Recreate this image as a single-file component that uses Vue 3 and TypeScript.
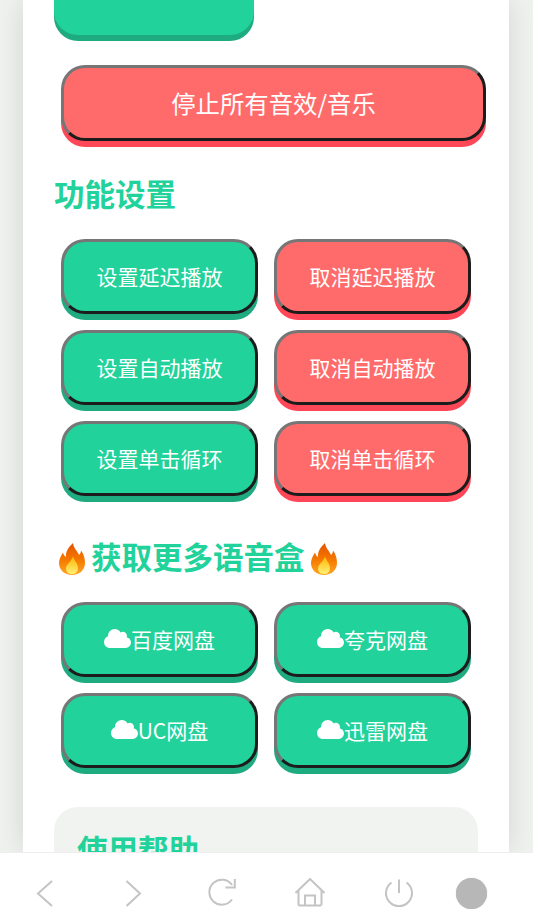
<script setup lang="ts">
interface Btn { label: string; kind: 'green' | 'red'; cloud?: boolean }
const settings: Btn[] = [
  { label: '设置延迟播放', kind: 'green' },
  { label: '取消延迟播放', kind: 'red' },
  { label: '设置自动播放', kind: 'green' },
  { label: '取消自动播放', kind: 'red' },
  { label: '设置单击循环', kind: 'green' },
  { label: '取消单击循环', kind: 'red' },
]
const drives: Btn[] = [
  { label: '百度网盘', kind: 'green', cloud: true },
  { label: '夸克网盘', kind: 'green', cloud: true },
  { label: 'UC网盘', kind: 'green', cloud: true },
  { label: '迅雷网盘', kind: 'green', cloud: true },
]
const cloudPath = 'M537.6 226.6c4.1-10.7 6.4-22.4 6.4-34.6 0-53-43-96-96-96-19.7 0-38.1 6-53.3 16.2C367 64.2 315.3 32 256 32c-88.4 0-160 71.6-160 160 0 2.7.1 5.4.2 8.1C40.2 219.8 0 273.2 0 336c0 79.5 64.5 144 144 144h368c70.7 0 128-57.3 128-128 0-61.9-44-113.6-102.4-125.4z'
</script>

<template>
  <div class="screen">
    <main class="scroller">
      <div class="card">
        <div class="top-button"></div>
        <button class="btn red wide">停止所有音效/音乐</button>

        <h2 class="heading first">功能设置</h2>
        <div class="grid">
          <button v-for="b in settings" :key="b.label" class="btn" :class="b.kind">{{ b.label }}</button>
        </div>

        <h2 class="heading fire-heading">
          <svg class="flame" viewBox="0 0 26 32">
            <defs>
              <linearGradient id="flameOuter" x1="0" y1="0" x2="0" y2="1">
                <stop offset="0" stop-color="#e65100" />
                <stop offset="0.55" stop-color="#f57c00" />
                <stop offset="1" stop-color="#ffa726" />
              </linearGradient>
              <linearGradient id="flameInner" x1="0" y1="0" x2="0" y2="1">
                <stop offset="0" stop-color="#ffb300" />
                <stop offset="1" stop-color="#fff176" />
              </linearGradient>
            </defs>
            <path fill="url(#flameOuter)" d="M14 0C14.500 5 18.500 8 20 12 21 11 22 9.500 22 7.500 24.800 11 26 15.500 26 20 26 27 20.500 32 13 32 5.500 32 0 27 0 20 0 16 2 13 4 9.500 4.500 11.500 5.500 13 7 14 6.500 8 10 4 14 0Z" />
            <path fill="url(#flameInner)" d="M14 13C14.500 17 19 20 19 25 19 29 16.500 31 13 31 9.500 31 7 29 7 25.500 7 21 12.500 19 14 13Z" />
          </svg>
          <span>获取更多语音盒</span>
          <svg class="flame" viewBox="0 0 26 32">
            <path fill="url(#flameOuter)" d="M14 0C14.500 5 18.500 8 20 12 21 11 22 9.500 22 7.500 24.800 11 26 15.500 26 20 26 27 20.500 32 13 32 5.500 32 0 27 0 20 0 16 2 13 4 9.500 4.500 11.500 5.500 13 7 14 6.500 8 10 4 14 0Z" />
            <path fill="url(#flameInner)" d="M14 13C14.500 17 19 20 19 25 19 29 16.500 31 13 31 9.500 31 7 29 7 25.500 7 21 12.500 19 14 13Z" />
          </svg>
        </h2>
        <div class="grid">
          <button v-for="b in drives" :key="b.label" class="btn" :class="b.kind">
            <svg class="cloud" viewBox="0 32 640 448"><path :d="cloudPath" fill="#fff" /></svg><span>{{ b.label }}</span>
          </button>
        </div>

        <section class="help">
          <h2 class="heading help-title">使用帮助</h2>
        </section>
      </div>
    </main>

    <nav class="bar">
      <div class="icons">
        <svg class="icon" viewBox="0 0 30 30"><path d="M22 3 8 15.500 22 28" /></svg>
        <svg class="icon" viewBox="0 0 30 30"><path d="M8.500 3 22 15.500 8.500 28" /></svg>
        <svg class="icon" viewBox="0 0 30 30"><path d="M25.100 7A12.500 12.500 0 1 0 25 21.500M27.800 1V9.500H18.500" /></svg>
        <svg class="icon" viewBox="0 0 30 30"><path d="M0.500 15 15 1l14.500 14M3.500 12.500V26a1.500 1.500 0 0 0 1.500 1.500h20a1.500 1.500 0 0 0 1.500-1.500V12.500M10 27.500V17.500h10v10" /></svg>
        <svg class="icon" viewBox="0 0 30 30"><path d="M7.500 4.500A13 13 0 1 0 22.500 4.500M15 1.500V15" /></svg>
      </div>
      <div class="avatar"></div>
    </nav>
  </div>
</template>

<style scoped>
.screen {
  width: 533px;
  height: 918px;
  display: flex;
  flex-direction: column;
  overflow: hidden;
  background: #f0f2ef;
  font-family: "Noto Sans CJK SC", Roboto, sans-serif;
}
.scroller {
  flex: 1;
  min-height: 0;
  overflow: hidden;
  padding: 0 24px 0 23px;
}
.card {
  background: #fff;
  box-shadow: 0 0 28px rgba(0, 0, 0, 0.12);
  padding: 0 31px;
  height: 100%;
  overflow: hidden;
}
.top-button {
  width: 200px;
  height: 35px;
  background: #21d29a;
  border-radius: 0 0 24px 24px;
  box-shadow: 0 6px 0 #1fab80;
  margin-bottom: 30px;
}
.btn {
  box-sizing: border-box;
  width: 197px;
  height: 75px;
  border: 3px solid;
  border-color: #767676 #1c1c1c #1c1c1c #767676;
  border-radius: 24px;
  color: #fff;
  font-family: inherit;
  font-size: 21px;
  padding: 0 0 2px;
  display: flex;
  align-items: center;
  justify-content: center;
}
.btn.green {
  background: #21d29a;
  box-shadow: 0 6px 0 #1fab80;
}
.btn.red {
  background: #ff6b6b;
  box-shadow: 0 6px 0 #ff4757;
}
.btn.wide {
  width: 425px;
  height: 76px;
  margin-left: 7px;
  font-size: 24.4px;
}
.heading {
  margin: 0;
  color: #21d29a;
  font-size: 30.5px;
  font-weight: 700;
  line-height: 40px;
}
.first {
  margin-top: 32px;
}
.fire-heading {
  margin-top: 40px;
  display: flex;
  align-items: center;
  padding-left: 5px;
  gap: 6px;
}
.flame {
  width: 26px;
  height: 32px;
  flex: none;
  margin-top: 6px;
}
.grid {
  display: grid;
  grid-template-columns: 197px 197px;
  gap: 16px;
  margin: 26px 0 0 7px;
}
.cloud {
  width: 27px;
  height: 19px;
  flex: none;
}
.help {
  margin-top: 39px;
  width: 424px;
  background: #f1f3f0;
  border-radius: 24px;
  padding: 20px 23px;
  box-sizing: border-box;
  height: 200px;
}
.help-title {
  line-height: 44px;
}
.bar {
  flex: none;
  height: 66px;
  background: #fff;
  border-top: 1px solid #eeeeee;
  box-sizing: border-box;
  display: flex;
  align-items: center;
  padding: 14px 0 0 29.5px;
}
.icons {
  display: flex;
  gap: 58.5px;
}
.icon {
  width: 30px;
  height: 30px;
  fill: none;
  stroke: #c4c4c4;
  stroke-width: 2;
}
.avatar {
  width: 31px;
  height: 31px;
  margin: 2px 0 0 42px;
  border-radius: 50%;
  background: #b7b7b7;
  box-shadow: 0 0 1px #b7b7b7;
}
</style>
